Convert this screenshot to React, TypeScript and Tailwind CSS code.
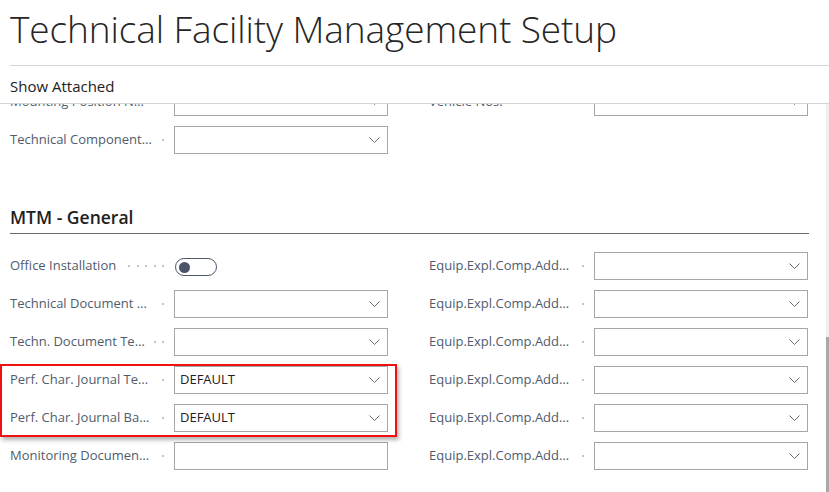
import React from "react";

type Kind = "select" | "text" | "toggle";

interface FieldProps {
    label: string;
    kind?: Kind;
    value?: string;
}

const Chevron = () => (
    <svg width="11" height="6" viewBox="0 0 11 6" fill="none">
        <path d="M0.5 0.5 L5.5 5.5 L10.5 0.5" stroke="#6b6b6b" strokeWidth="1" />
    </svg>
);

// dotted leader between a label and its field
const Leader = () => (
    <div className="flex-1 min-w-[21px] pl-[9px] pr-[10px]">
        <div className="w-full flex justify-end items-center gap-[6.5px] overflow-hidden">
            {Array.from({ length: 12 }).map((_, i) => (
                <span key={i} className="shrink-0 w-[2px] h-[1.5px] bg-[#c4c4c4]" />
            ))}
        </div>
    </div>
);

const Field = ({ label, kind = "select", value }: FieldProps) => (
    <div className="h-[38px] flex items-center">
        <div className="flex-1 min-w-0 flex items-center">
            <span className="whitespace-nowrap text-[13px] text-[#505c6d]">{label}</span>
            <Leader />
        </div>
        {kind === "toggle" ? (
            <div className="w-[214px] flex items-center">
                <div className="ml-[1px] mt-[2px] w-[42px] h-[18px] rounded-full border border-[#4f5968] flex items-center pl-[3px]">
                    <div className="w-[11px] h-[11px] rounded-full bg-[#4a5468]" />
                </div>
            </div>
        ) : (
            <div className="w-[214px] h-[28px] border border-[#a6a6a6] flex items-center justify-between pl-[5px] pr-[7px]">
                <span className="text-[13px] text-[#212121]">{value}</span>
                {kind === "select" && <Chevron />}
            </div>
        )}
    </div>
);

export default function App() {
    return (
        <div className="w-[829px] h-[492px] overflow-hidden bg-white flex flex-col font-['Open_Sans','Liberation_Sans',sans-serif]">
            {/* page header */}
            <div className="h-[66px] ml-[10px] border-b border-[#d6d6d6]">
                <h1 className="text-[37px] font-light leading-[57px] text-[#262626] tracking-[-0.1px]">
                    Technical Facility Management Setup
                </h1>
            </div>
            <div className="h-[38px] pl-[10px] pt-[3px] flex items-center text-[15px] text-[#212121] border-b border-[#d4d4d4]">
                Show Attached
            </div>

            {/* scrolled content */}
            <div className="flex flex-1 min-h-0">
                <div className="flex-1 overflow-hidden">
                    <div className="-mt-[21px] pl-[10px] pr-[17px]">
                        <div className="grid grid-cols-[378px_379px] gap-x-[41px]">
                            <div className="flex flex-col">
                                <Field label="Mounting Position N…" />
                                <Field label="Technical Component…" />
                            </div>
                            <div className="flex flex-col">
                                <Field label="Vehicle Nos." />
                            </div>
                        </div>

                        <div className="mt-[46px] mb-[13px] pb-[4px] border-b border-[#666a70]">
                            <h2 className="h-[24px] leading-[24px] text-[17.5px] font-semibold text-[#212121]">
                                MTM - General
                            </h2>
                        </div>

                        <div className="grid grid-cols-[378px_379px] gap-x-[41px]">
                            <div className="flex flex-col">
                                <Field label="Office Installation" kind="toggle" />
                                <Field label="Technical Document …" />
                                <Field label="Techn. Document Te…" />
                                <div className="relative">
                                    <Field label="Perf. Char. Journal Te…" value="DEFAULT" />
                                    <Field label="Perf. Char. Journal Ba…" value="DEFAULT" />
                                    <div className="absolute top-[3px] bottom-0 -left-[10px] w-[397px] border-2 border-[#f01010] shadow-[2px_3px_4px_rgba(0,0,0,0.3)] pointer-events-none" />
                                </div>
                                <Field label="Monitoring Documen…" kind="text" />
                            </div>
                            <div className="flex flex-col">
                                <Field label="Equip.Expl.Comp.Add…" />
                                <Field label="Equip.Expl.Comp.Add…" />
                                <Field label="Equip.Expl.Comp.Add…" />
                                <Field label="Equip.Expl.Comp.Add…" />
                                <Field label="Equip.Expl.Comp.Add…" />
                                <Field label="Equip.Expl.Comp.Add…" />
                            </div>
                        </div>
                    </div>
                </div>

                {/* scrollbar */}
                <div className="w-[3px] bg-[#f0f0f0] flex flex-col">
                    <div className="mt-[233px] flex-1 bg-[#a8a8a8]" />
                </div>
            </div>
        </div>
    );
}
